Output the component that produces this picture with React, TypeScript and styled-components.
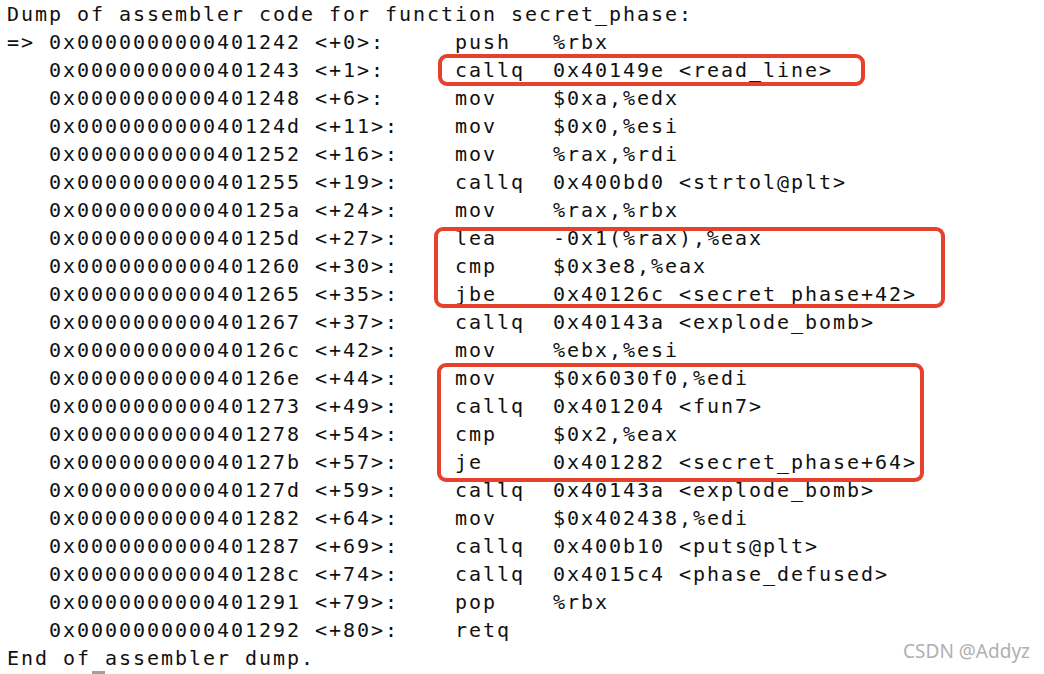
import React from "react";
import styled, { createGlobalStyle } from "styled-components";

const Global = createGlobalStyle`
  html, body { margin: 0; padding: 0; background: #ffffff; }
  body { width: 1044px; height: 674px; overflow: hidden; }
`;

const Page = styled.div`
  position: relative;
  width: 1044px;
  height: 674px;
  background: #ffffff;
  overflow: hidden;
`;

const Listing = styled.div`
  position: relative;
  display: flex;
  flex-direction: column;
  padding-left: 7px;
  font-family: "DejaVu Sans Mono", "Liberation Mono", monospace;
  font-size: 20px;
  letter-spacing: 1.96px;
  line-height: 28px;
  color: #111111;
  white-space: pre;
`;

const Line = styled.div`
  height: 28px;
`;

const Row = styled.div`
  display: grid;
  grid-template-columns: 448px 98px auto;
  height: 28px;
`;

const Cell = styled.span`
  white-space: pre;
`;

const Cursor = styled.span`
  position: relative;
  &::after {
    content: "";
    position: absolute;
    left: 1px;
    right: 0px;
    bottom: -4px;
    height: 3px;
    background: #a0a0a0;
  }
`;

const Highlight = styled.div<{ $x: number; $y: number; $w: number; $h: number }>`
  position: absolute;
  left: ${(p) => p.$x}px;
  top: ${(p) => p.$y}px;
  width: ${(p) => p.$w}px;
  height: ${(p) => p.$h}px;
  box-sizing: border-box;
  border: 4px solid #e6412b;
  border-radius: 9px;
  pointer-events: none;
`;

const Watermark = styled.div`
  position: absolute;
  right: 14px;
  bottom: 10px;
  font-family: "Noto Sans", "Open Sans", sans-serif;
  font-size: 19px;
  color: #b0b0b0;
  text-shadow: 0 0 1px rgba(255, 255, 255, 0.9);
`;

type Ins = { cur?: boolean; addr: string; off: number; op: string; args?: string };

const rows: Ins[] = [
  { cur: true, addr: "401242", off: 0, op: "push", args: "%rbx" },
  { addr: "401243", off: 1, op: "callq", args: "0x40149e <read_line>" },
  { addr: "401248", off: 6, op: "mov", args: "$0xa,%edx" },
  { addr: "40124d", off: 11, op: "mov", args: "$0x0,%esi" },
  { addr: "401252", off: 16, op: "mov", args: "%rax,%rdi" },
  { addr: "401255", off: 19, op: "callq", args: "0x400bd0 <strtol@plt>" },
  { addr: "40125a", off: 24, op: "mov", args: "%rax,%rbx" },
  { addr: "40125d", off: 27, op: "lea", args: "-0x1(%rax),%eax" },
  { addr: "401260", off: 30, op: "cmp", args: "$0x3e8,%eax" },
  { addr: "401265", off: 35, op: "jbe", args: "0x40126c <secret_phase+42>" },
  { addr: "401267", off: 37, op: "callq", args: "0x40143a <explode_bomb>" },
  { addr: "40126c", off: 42, op: "mov", args: "%ebx,%esi" },
  { addr: "40126e", off: 44, op: "mov", args: "$0x6030f0,%edi" },
  { addr: "401273", off: 49, op: "callq", args: "0x401204 <fun7>" },
  { addr: "401278", off: 54, op: "cmp", args: "$0x2,%eax" },
  { addr: "40127b", off: 57, op: "je", args: "0x401282 <secret_phase+64>" },
  { addr: "40127d", off: 59, op: "callq", args: "0x40143a <explode_bomb>" },
  { addr: "401282", off: 64, op: "mov", args: "$0x402438,%edi" },
  { addr: "401287", off: 69, op: "callq", args: "0x400b10 <puts@plt>" },
  { addr: "40128c", off: 74, op: "callq", args: "0x4015c4 <phase_defused>" },
  { addr: "401291", off: 79, op: "pop", args: "%rbx" },
  { addr: "401292", off: 80, op: "retq" },
];

export default function App() {
  return (
    <Page>
      <Global />
      <Listing>
        <Line>Dump of assembler code for function secret_phase:</Line>
        {rows.map((r) => (
          <Row key={r.addr}>
            <Cell>{`${r.cur ? "=> " : "   "}0x0000000000${r.addr} <+${r.off}>:`}</Cell>
            <Cell>{r.op}</Cell>
            <Cell>{r.args ?? ""}</Cell>
          </Row>
        ))}
        <Line>
          End of<Cursor> </Cursor>assembler dump.
        </Line>
      </Listing>
      <Highlight $x={438} $y={54} $w={427} $h={32} />
      <Highlight $x={434} $y={227} $w={511} $h={81} />
      <Highlight $x={437} $y={363} $w={487} $h={119} />
      <Watermark>CSDN @Addyz</Watermark>
    </Page>
  );
}
